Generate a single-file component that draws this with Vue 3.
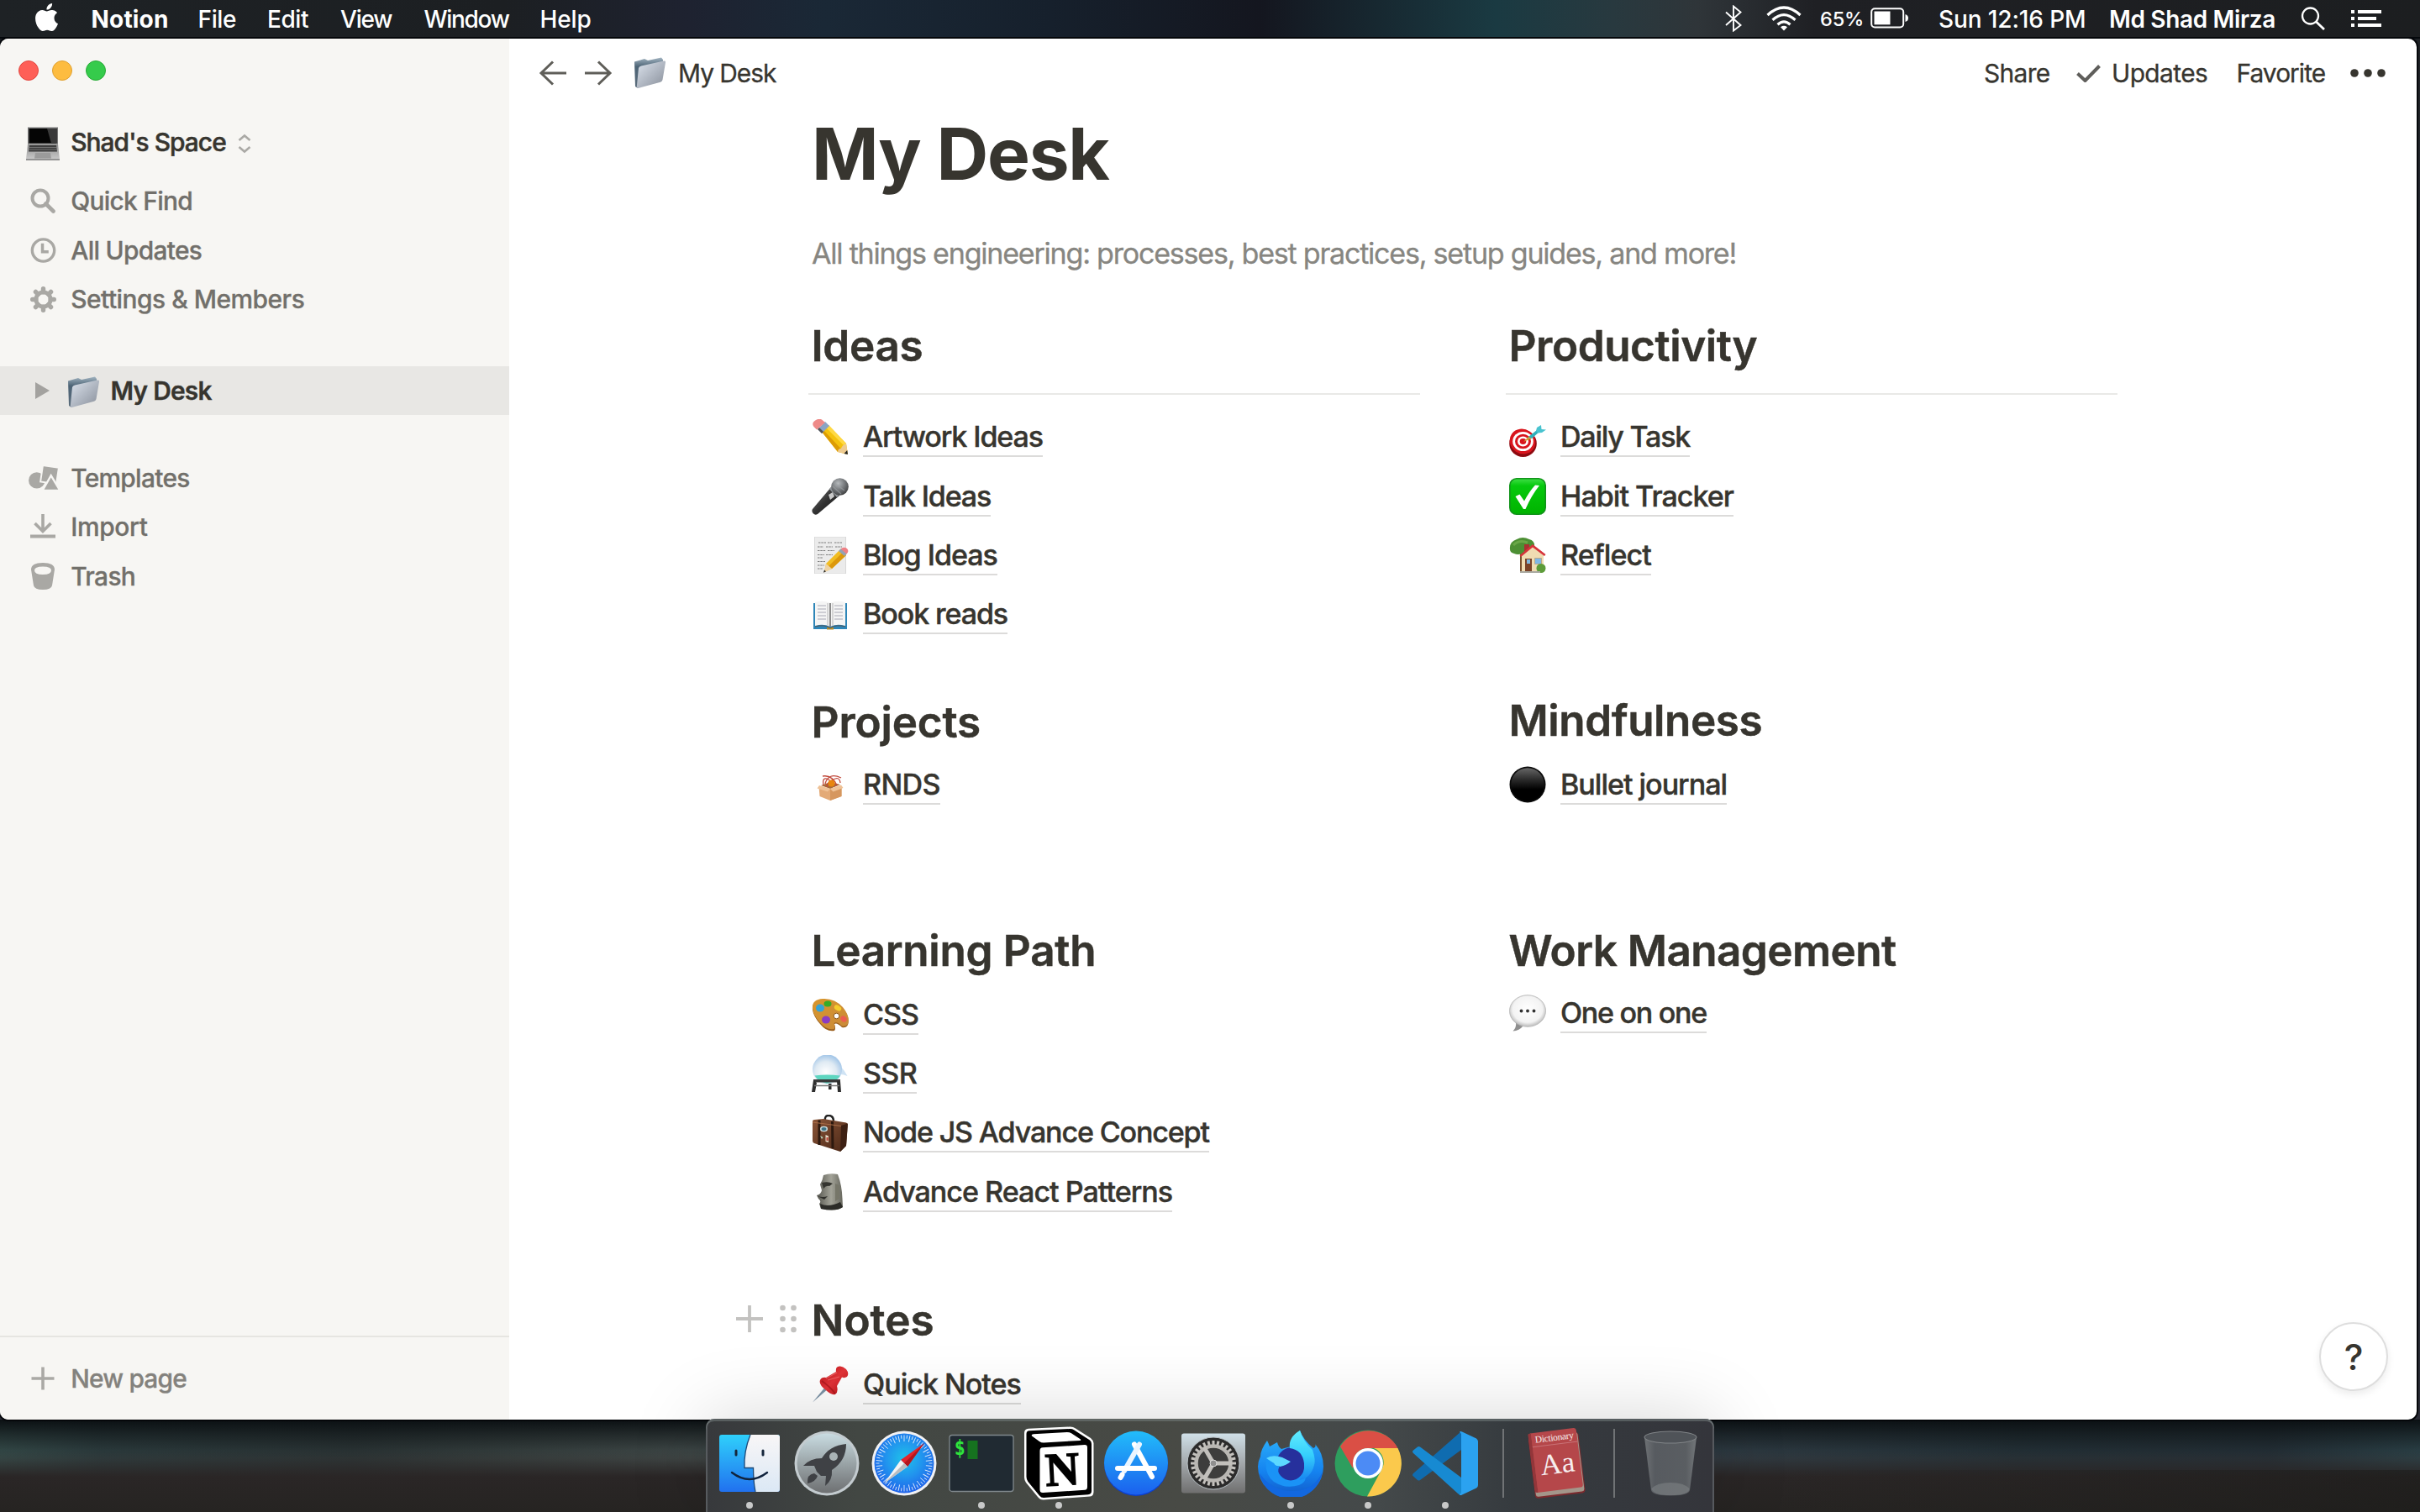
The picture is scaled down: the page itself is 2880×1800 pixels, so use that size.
<script setup>
const menus = [
  { text: 'Notion', w: 127, ls: 0.19, bold: true },
  { text: 'File', w: 82.5, ls: -0.37 },
  { text: 'Edit', w: 87, ls: -0.42 },
  { text: 'View', w: 99.5, ls: -1.2 },
  { text: 'Window', w: 138, ls: -1.3 },
  { text: 'Help', w: 70, ls: -0.12 },
]

const sideTop = [
  { icon: 'find', text: 'Quick Find', ls: -0.72 },
  { icon: 'clock', text: 'All Updates', ls: -0.72 },
  { icon: 'gear', text: 'Settings & Members', ls: -0.5 },
]
const sideBottom = [
  { icon: 'templates', text: 'Templates', ls: -0.71 },
  { icon: 'import', text: 'Import', ls: -0.36 },
  { icon: 'trash', text: 'Trash', ls: -0.68 },
]

const columns = [
  [
    {
      title: 'Ideas', ls: -0.32, rule: true, size: 'tall', links: [
        { icon: 'pencil', text: 'Artwork Ideas', ls: -1.12 },
        { icon: 'mic', text: 'Talk Ideas', ls: -1.22 },
        { icon: 'memo', text: 'Blog Ideas', ls: -1.02 },
        { icon: 'book', text: 'Book reads', ls: -1.13 },
      ],
    },
    {
      title: 'Projects', ls: -0.14, size: 'short', links: [
        { icon: 'box', text: 'RNDS', ls: -0.62 },
      ],
    },
    {
      title: 'Learning Path', ls: -0.28, size: 'mid', links: [
        { icon: 'palette', text: 'CSS', ls: -1.01 },
        { icon: 'flask', text: 'SSR', ls: -0.7 },
        { icon: 'case', text: 'Node JS Advance Concept', ls: -1.17 },
        { icon: 'moai', text: 'Advance React Patterns', ls: -1.01 },
      ],
    },
    {
      title: 'Notes', ls: 0.03, size: 'last', handle: true, links: [
        { icon: 'pin', text: 'Quick Notes', ls: -1.01 },
      ],
    },
  ],
  [
    {
      title: 'Productivity', ls: -0.41, rule: true, size: 'tall up', links: [
        { icon: 'target', text: 'Daily Task', ls: -1.25 },
        { icon: 'check', text: 'Habit Tracker', ls: -0.99 },
        { icon: 'house', text: 'Reflect', ls: -0.92 },
      ],
    },
    {
      title: 'Mindfulness', ls: -0.42, size: 'short down', links: [
        { icon: 'circle', text: 'Bullet journal', ls: -1.03 },
      ],
    },
    {
      title: 'Work Management', ls: -0.55, size: 'mid close', links: [
        { icon: 'bubble', text: 'One on one', ls: -1.3 },
      ],
    },
  ],
]

const dock = [
  { icon: 'finder', dot: true },
  { icon: 'launchpad' },
  { icon: 'safari' },
  { icon: 'terminal', dot: true },
  { icon: 'notion', dot: true },
  { icon: 'appstore' },
  { icon: 'settings' },
  { icon: 'firefox', dot: true },
  { icon: 'chrome', dot: true },
  { icon: 'vscode', dot: true },
]

const ticks = Array.from({ length: 60 }, (_, i) => ({ a: i * 6, long: i % 2 === 0 }))
const teeth = Array.from({ length: 28 }, (_, i) => i * (360 / 28))
</script>

<template>
  <div class="screen">
    <!-- Shared artwork -->
    <svg class="defs" width="0" height="0" aria-hidden="true">
      <defs>
        <linearGradient id="g-folder" x1="0" y1="0" x2="1" y2="1"><stop offset="0" stop-color="#dde4ee" /><stop offset=".6" stop-color="#a9b0bb" /><stop offset="1" stop-color="#878d98" /></linearGradient>
        <linearGradient id="g-back" x1="0" y1="0" x2="0" y2="1"><stop offset="0" stop-color="#a3b5c2" /><stop offset=".3" stop-color="#4c6375" /><stop offset="1" stop-color="#5d6e7d" /></linearGradient>
        <linearGradient id="g-mic" x1="0" y1="0" x2="1" y2="1"><stop offset="0" stop-color="#777" /><stop offset=".5" stop-color="#333" /><stop offset="1" stop-color="#111" /></linearGradient>
        <radialGradient id="g-michead" cx=".4" cy=".3" r=".8"><stop offset="0" stop-color="#b6babd" /><stop offset=".6" stop-color="#66696c" /><stop offset="1" stop-color="#333" /></radialGradient>
        <linearGradient id="g-check" x1="0" y1="0" x2="0" y2="1"><stop offset="0" stop-color="#3ede45" /><stop offset=".2" stop-color="#06c90d" /><stop offset="1" stop-color="#00b300" /></linearGradient>
        <linearGradient id="g-circle" x1="0" y1="0" x2="0" y2="1"><stop offset="0" stop-color="#666" /><stop offset=".35" stop-color="#2b2b2b" /><stop offset=".65" stop-color="#000" /></linearGradient>
        <linearGradient id="g-wood" x1="0" y1="0" x2="1" y2="1"><stop offset="0" stop-color="#d8962c" /><stop offset="1" stop-color="#c98a3a" /></linearGradient>
        <radialGradient id="g-flask" cx=".45" cy=".6" r=".6"><stop offset="0" stop-color="#ffffff" /><stop offset=".6" stop-color="#dfeaf3" /><stop offset="1" stop-color="#a3c6e8" /></radialGradient>
        <linearGradient id="g-case" x1="0" y1="0" x2="1" y2="1"><stop offset="0" stop-color="#8a5538" /><stop offset="1" stop-color="#4a2716" /></linearGradient>
        <linearGradient id="g-moai" x1="0" y1="0" x2="1" y2="0"><stop offset="0" stop-color="#55554e" /><stop offset=".55" stop-color="#a3a398" /><stop offset="1" stop-color="#66665d" /></linearGradient>
        <radialGradient id="g-bubble" cx=".5" cy=".45" r=".55"><stop offset="0" stop-color="#fff" /><stop offset=".75" stop-color="#f3f3f3" /><stop offset="1" stop-color="#b9b9b9" /></radialGradient>
        <linearGradient id="g-pin" x1="0" y1="0" x2="1" y2="1"><stop offset="0" stop-color="#b51216" /><stop offset=".5" stop-color="#e23338" /><stop offset="1" stop-color="#b81218" /></linearGradient>
        <linearGradient id="g-laptop" x1="0" y1="0" x2="0" y2="1"><stop offset="0" stop-color="#8d8d8d" /><stop offset="1" stop-color="#c9c9c9" /></linearGradient>
        <linearGradient id="g-finder" x1="0" y1="0" x2="0" y2="1"><stop offset="0" stop-color="#2fd0fb" /><stop offset="1" stop-color="#2171ef" /></linearGradient>
        <linearGradient id="g-finder2" x1="0" y1="0" x2="0" y2="1"><stop offset="0" stop-color="#f8f6f7" /><stop offset="1" stop-color="#dbe8f5" /></linearGradient>
        <linearGradient id="g-launch" x1="0" y1="0" x2="0" y2="1"><stop offset="0" stop-color="#c9dce2" /><stop offset=".5" stop-color="#9aa4a7" /><stop offset="1" stop-color="#6e7072" /></linearGradient>
        <radialGradient id="g-safari" cx=".5" cy=".42" r=".6"><stop offset="0" stop-color="#1fc3e9" /><stop offset=".5" stop-color="#2195ee" /><stop offset="1" stop-color="#2060ea" /></radialGradient>
        <linearGradient id="g-store" x1="0" y1="0" x2="0" y2="1"><stop offset="0" stop-color="#22bdfa" /><stop offset="1" stop-color="#1b60ee" /></linearGradient>
        <linearGradient id="g-set" x1="0" y1="0" x2="0" y2="1"><stop offset="0" stop-color="#d0e0e8" /><stop offset=".5" stop-color="#a3a8ab" /><stop offset="1" stop-color="#6f6f6f" /></linearGradient>
        <linearGradient id="g-fox" x1="0" y1="0" x2="0" y2="1"><stop offset="0" stop-color="#2fb6fb" /><stop offset=".6" stop-color="#1583f0" /><stop offset="1" stop-color="#1159c8" /></linearGradient>
        <linearGradient id="g-flame" x1="0" y1="0" x2="0" y2="1"><stop offset="0" stop-color="#62ecff" /><stop offset=".5" stop-color="#35cffc" /><stop offset="1" stop-color="#1785f0" /></linearGradient>
        <linearGradient id="g-bin" x1="0" y1="0" x2="1" y2="0"><stop offset="0" stop-color="#74787b" /><stop offset=".2" stop-color="#5b5f64" /><stop offset=".8" stop-color="#5e6266" /><stop offset="1" stop-color="#7a7e81" /></linearGradient>
      </defs>

      <symbol id="i-folder" viewBox="0 0 39 38">
        <path d="M1 5.500 L13 2 L17 4 L33 .5 L35 3 L35 12 L5 37 L2 35Z" fill="url(#g-back)" />
        <path d="M6 13 Q6.500 11 9 10.500 L36 4.500 Q38.500 4 38 6.500 L34.500 27 Q34 29 32 29.800 L5.500 37 Q3.500 37.500 3.800 35Z" fill="url(#g-folder)" />
      </symbol>
      <symbol id="i-laptop" viewBox="0 0 40 40">
        <path d="M2 .5h36v20H2z" fill="#777" /><path d="M3.500 2h33v17.500h-33z" fill="#050505" /><path d="M25 2h11.500v17.500H30z" fill="#3a3a3a" />
        <path d="M2 20.500h36L40 38.500H0z" fill="url(#g-laptop)" />
        <path d="M4 22h32l1 7.500H3z" fill="#3d3d3d" /><path d="M4 24.500h32.500M3.600 27h33" stroke="#8a8a8a" stroke-width=".7" />
        <path d="M11 31h18l1 6.500H10z" fill="#9b9b9b" /><path d="M0 38.200h40v1.500H0z" fill="#777" />
      </symbol>

      <symbol id="i-pencil" viewBox="0 0 44 44">
        <path d="M12 15 L20 7 L41 29 L43 42 L31 39Z" fill="#f4c20d" /><path d="M17 10 L20 7 L41 29 L38 31Z" fill="#ffd943" /><path d="M12 15 L14 13 L35 35.500 L31 39Z" fill="#dc9c05" />
        <path d="M41 29 L43 42 L31 39 Q31 35 35 35 Q36 31 41 29Z" fill="#eecb90" /><path d="M42.200 37 L43 42 L38.500 41Z" fill="#222" />
        <path d="M7 12 L16 3 L21 8 L12 17Z" fill="#8aa4c4" /><path d="M7 12 L9 10 L14 15 L12 17Z" fill="#555" />
        <path d="M2.500 9 Q-.5 5 3.500 2 Q8-1.500 12 .5 L16 4 L6 12.500Z" fill="#ee8a88" />
      </symbol>
      <symbol id="i-mic" viewBox="0 0 44 44">
        <path d="M23 11 L33 21 L7 43 Q4 45 1.500 42 Q-.5 39 1 37Z" fill="url(#g-mic)" /><path d="M20 20 L25 17 L27 22 L22 26Z" fill="#c9c9c9" />
        <path d="M22 12 L31 22" stroke="#8f9498" stroke-width="3" /><circle cx="33.500" cy="10.500" r="10.300" fill="url(#g-michead)" />
        <path d="M27 6 L39 15 M25 10 L35 19" stroke="#9da1a4" stroke-width="1.500" opacity=".6" />
      </symbol>
      <symbol id="i-memo" viewBox="0 0 44 44">
        <path d="M3.500 0h37v44h-37z" fill="#ebebeb" stroke="#d9d9d9" />
        <path d="M8 7h9m2 0h5m3 0h9M7 12h7m3 0h8m3 0h8M7 16.500h10m2 0h8M7 21.500h8m2 0h8M7 25h6M7 29.500h9M7 34h8M7 38h6" stroke="#7d7d7d" stroke-width="1.100" stroke-dasharray="2.500 .8" />
        <path d="M17 32 L34 15 L41 22 L24 38 L15 42Z" fill="#f1bd22" /><path d="M20 35 L37 18.500 L41 22 L24 38Z" fill="#dc980c" />
        <path d="M17 32 L24 38 L14.500 42.500Z" fill="#eed3a4" /><path d="M15 39.500 L17 41.300 L14 42.700Z" fill="#222" /><path d="M32 17 L35 14 L42 20 L39 23Z" fill="#93a3b5" />
        <path d="M34.500 14.500 Q38 11.500 42 14 Q45 17 41.500 20.500Z" fill="#ee8085" />
      </symbol>
      <symbol id="i-book" viewBox="0 0 44 44">
        <path d="M2 8h40v31H2z" fill="#2e86b8" /><path d="M18 37h8v2.500h-8z" fill="#b38b2c" />
        <path d="M4 7 Q14 4 22 8 Q30 4 40 7 V35 Q30 32 22 36 Q14 32 4 35Z" fill="#f5f5f5" />
        <path d="M22 8 V36" stroke="#8b8b8b" stroke-width="2" /><path d="M19 8v27M25 8v27" stroke="#d5d5d5" stroke-width="2" />
        <path d="M7 11h10M7 15h10M7 19h10M7 23h10M7 27h10M27 11h10M27 15h10M27 19h10M27 23h10M27 27h10" stroke="#a8a8b4" stroke-width="1" /><path d="M4 36 Q14 33 22 37.500 Q30 33 40 36" stroke="#555" fill="none" />
      </symbol>
      <symbol id="i-box" viewBox="0 0 44 44">
        <path d="M8.500 24 L22 27 L35.500 24 V36 L22 41 L9.500 36Z" fill="#e3aa77" /><path d="M22 27 L35.500 24 V36 L22 41Z" fill="#d6975f" />
        <path d="M11 23 L22 19 L34 22 L22 27Z" fill="#a86a38" />
        <path d="M14 23 Q12 12 20 16 Q25 19 28 24 M34 20 Q33 11 24 17 Q17 21 18 25 M13 12 Q24 10 30 23 M35 14 Q20 7 16 21" fill="none" stroke="#c14a3c" stroke-width="1.300" />
        <circle cx="23.500" cy="20.500" r="4" fill="#e8860f" />
        <path d="M9 23 L22 27 L19 30.500 L6.500 26.500Z M35 22.500 L22 27 L25.500 30.500 L37.500 26Z" fill="#efc297" />
      </symbol>
      <symbol id="i-palette" viewBox="0 0 44 44">
        <path d="M1 16 Q0 5 13 4 Q27 3 37 14 Q46 25 43 34 Q41 38 36 37 Q30 31 27 33 Q29 39 27 41 Q18 43 10 33 Q2 24 1 16Z" fill="#9a5f1d" />
        <path d="M1 14.500 Q0 4 13 3 Q27 2 37 13 Q46 24 43 33 Q41 36.500 36 35.500 Q30 29.500 26.500 32 Q28.500 37 26.500 39 Q18 41 10 31.500 Q2 23 1 14.500Z" fill="url(#g-wood)" />
        <circle cx="29.500" cy="23.500" r="3.300" fill="#fff" stroke="#8c5618" />
        <ellipse cx="10" cy="14" rx="5" ry="4.500" fill="#35a3d6" /><ellipse cx="19" cy="9" rx="4.500" ry="3.500" fill="#33ab28" /><ellipse cx="31" cy="14" rx="4.500" ry="3" transform="rotate(30 31 14)" fill="#f5cc2e" /><ellipse cx="38" cy="27" rx="4" ry="3.300" transform="rotate(40 38 27)" fill="#ec5d50" /><ellipse cx="17" cy="28" rx="5" ry="4.500" fill="#8a3cc4" />
      </symbol>
      <symbol id="i-flask" viewBox="0 0 44 44">
        <path d="M33 12 Q39 18 42.500 25 Q38 23 34 23Z" fill="#cfe3f4" /><circle cx="18.500" cy="17" r="17.500" fill="url(#g-flask)" /><path d="M3.500 24.500 Q18 22.500 34 24.500 Q30 31 18 34 Q7 31 3.500 24.500Z" fill="#5ed6c0" />
        <path d="M2 29 H34 V32.500 H2Z" fill="#3a3a3a" /><path d="M2 30 L0 44 H4 L6 33Z M30 31 L31 44 H35 L34 31Z M20 34h3.500v7H20z" fill="#2e2e2e" /><path d="M3 36.500h30" stroke="#777" stroke-width="1.500" />
      </symbol>
      <symbol id="i-case" viewBox="0 0 44 44">
        <path d="M16 8 Q15 1 20 1 Q26 1 26 8" fill="none" stroke="#222" stroke-width="2.500" />
        <path d="M1 8 Q1 6 3 6 L14 5 L41 9.500 Q43 10 42.800 12 L41 37 L34 44 L3 34 Q1 33.500 1 31Z" fill="url(#g-case)" /><path d="M35 13 L43 10.500 L41 37 L34 44Z" fill="#3d2013" />
        <path d="M9 6.500V36M24.500 8 25 40" stroke="#2d190f" stroke-width="3" /><path d="M1 9 L35 13.500" stroke="#a86c46" stroke-width="1" />
        <ellipse cx="14.500" cy="17" rx="4.500" ry="3.300" fill="#cfe2e4" /><ellipse cx="14.500" cy="17" rx="3" ry="2.100" fill="#3e7385" /><path d="M16.500 24 L20 25.500 V33 L16.500 32Z" fill="#e5dcc8" /><path d="M17.500 27h2v4h-2z" fill="#b83b2d" /><path d="M10 25 L13.500 27 L12 29Z" fill="#b7dcc6" />
      </symbol>
      <symbol id="i-moai" viewBox="0 0 44 44">
        <path d="M14 2 Q22-1 31 1 Q36 14 36.500 30 L37 40 Q30 46 11 42 L9 36 Q12 33 8 30 L6 26 Q11 25 12 20 L10 13 Q13 8 14 2Z" fill="url(#g-moai)" />
        <path d="M12 11 Q20 9 25 12 L21 15 Q17 14 14 18Z" fill="#34342f" /><path d="M7 27 Q13 29 19 27 L15 31Z" fill="#2e2e2a" /><path d="M10 36 Q20 41 34 34 L37 40 Q28 46 11 42Z" fill="#2c2c28" /><path d="M28 12 L33 14 V30 L28 33Z" fill="#767669" />
      </symbol>
      <symbol id="i-pin" viewBox="0 0 44 44">
        <path d="M17 24 L20 27 L1 43.500Z" fill="#7c93a6" /><path d="M10 17 Q12 13 17 14 L29 7 Q28 1 33 .5 Q37 0 41 4 Q45 9 42 13 Q39 15 36 13.500 L30 24 Q32 31 28 34 Q23 35 17 29 Q8 22 10 17Z" fill="url(#g-pin)" />
        <path d="M17 15 L30 8 M19 17 L33 13" stroke="#ff8b8b" stroke-width="1.300" opacity=".5" /><path d="M12 18 Q21 24 28 33" fill="none" stroke="#9c1015" stroke-width="2" opacity=".6" />
      </symbol>
      <symbol id="i-target" viewBox="0 0 44 44">
        <ellipse cx="16.500" cy="27" rx="16.300" ry="16" fill="#8e0a10" /><ellipse cx="16" cy="24.500" rx="15.700" ry="14.500" transform="rotate(35 16 24.500)" fill="#d8151d" /><ellipse cx="16.500" cy="24.500" rx="12.300" ry="11.500" fill="#fff" /><ellipse cx="16.500" cy="24.500" rx="9.500" ry="8.700" fill="#d8151d" /><ellipse cx="16.500" cy="24.500" rx="6.500" ry="5.900" fill="#fff" /><ellipse cx="16.500" cy="24.500" rx="3.800" ry="3.400" fill="#d8151d" />
        <path d="M17 25 L24 18 L27 21Z" fill="#c9a33a" /><path d="M23 19 L33 11 L36 13 L27 21Z" fill="#2fb1bb" /><path d="M32 12 L33 8 L38 5 L38.500 10 L44 10.500 L39 14 L34 14.500Z" fill="#49c3cf" />
      </symbol>
      <symbol id="i-check" viewBox="0 0 44 44">
        <rect x=".8" y=".8" width="42.400" height="42.400" rx="8" fill="url(#g-check)" stroke="#11931a" stroke-width="1.600" /><path d="M7.500 22 L12.500 19.500 L18 27.500 Q24 16 31 8.500 L36 9 Q27 20 19.500 37 H17Z" fill="#fff" />
      </symbol>
      <symbol id="i-house" viewBox="0 0 44 44">
        <path d="M13 18h5v24h-5z" fill="#7c5230" /><path d="M1 15 Q0 6 9 3 Q16-1 24 3 Q31 5 30 12 Q26 19 16 20 Q10 22 6 20 Q1 19 1 15Z" fill="#4d8f34" /><path d="M5 10 Q12 3 22 7" stroke="#6aa748" fill="none" stroke-width="3" />
        <path d="M18 9h6v8h-6z" fill="#a93030" /><path d="M15 22 L28 11 L41 22 V41 H15Z" fill="#f0dcb2" /><path d="M12.500 22 L28 9 L43.500 21 L42 23 L28 12.500 L14 24Z" fill="#d6333a" />
        <path d="M19 26h8v15h-8z" fill="#7b4227" /><path d="M21 27h4v5h-4z" fill="#7fb7e0" /><path d="M30.500 25.500h8v7h-8z" fill="#7fb7e6" stroke="#b9a888" /><circle cx="38" cy="37.500" r="5.500" fill="#5d9c39" /><path d="M13 41h24v2H13z" fill="#a9a9a0" />
      </symbol>
      <symbol id="i-circle" viewBox="0 0 44 44"><circle cx="22" cy="22" r="21.500" fill="#0a0a0a" /><circle cx="22" cy="22" r="19.800" fill="url(#g-circle)" /></symbol>
      <symbol id="i-bubble" viewBox="0 0 44 44">
        <path d="M8 33 Q9 39 4.500 43.500 Q12 43 17 37Z" fill="#8e8e8e" /><ellipse cx="22" cy="19.500" rx="21.500" ry="18.800" fill="url(#g-bubble)" stroke="#b3b3b3" stroke-width=".8" /><circle cx="14.500" cy="19.500" r="1.900" fill="#333" /><circle cx="22" cy="19.500" r="1.900" fill="#333" /><circle cx="29.500" cy="19.500" r="1.900" fill="#333" />
      </symbol>

      <symbol id="i-find" viewBox="0 0 30 30"><circle cx="12" cy="12" r="9.500" fill="none" stroke="currentColor" stroke-width="4" /><path d="M18.500 18.500 L27.500 27.500" stroke="currentColor" stroke-width="4.600" stroke-linecap="round" /></symbol>
      <symbol id="i-clock" viewBox="0 0 32 32"><circle cx="16" cy="16" r="13.600" fill="none" stroke="currentColor" stroke-width="3.500" /><path d="M15 7.500 V17.700 H22.500" fill="none" stroke="currentColor" stroke-width="3.600" /></symbol>
      <symbol id="i-gear" viewBox="0 0 32 32"><g stroke="currentColor" stroke-width="5.600"><path v-for="k in 4" :key="k" d="M16 2.800 V7 M16 25 V29.200" :transform="`rotate(${k * 45} 16 16)`" stroke-linecap="round" /></g><circle cx="16" cy="16" r="8.900" fill="none" stroke="currentColor" stroke-width="5" /></symbol>
      <symbol id="i-templates" viewBox="0 0 38 32"><circle cx="10.500" cy="19.500" r="10" fill="currentColor" /><path d="M18 1 L37.500 4 L34.500 24 L15 21Z" fill="currentColor" stroke="#f7f6f3" stroke-width="2" /><path d="M28 13.500 L39 32 H17.500Z" fill="currentColor" stroke="#f7f6f3" stroke-width="2.400" /></symbol>
      <symbol id="i-import" viewBox="0 0 30 30"><path d="M15 0 V20 M5.500 11 L15 20.500 L24.500 11" fill="none" stroke="currentColor" stroke-width="3.600" /><path d="M0 26.500h30" stroke="currentColor" stroke-width="4" /></symbol>
      <symbol id="i-trash" viewBox="0 0 28 32"><path fill-rule="evenodd" d="M0 8 Q0 0 14 0 Q28 0 28 8 L25 27 Q24 32 14 32 Q4 32 3 27Z M4 9 Q4 14 14 14 Q24 14 24 9 Q24 4.500 14 4.500 Q4 4.500 4 9Z" fill="currentColor" /></symbol>

      <symbol id="d-finder" viewBox="0 0 80 80">
        <rect x="4" y="6" width="72" height="68" rx="3" fill="url(#g-finder)" /><path d="M41 6 H73 Q76 6 76 9 V71 Q76 74 73 74 H47 Q45 62 45 46 H34 Q33 26 41 6Z" fill="url(#g-finder2)" />
        <path d="M41 6 Q33 26 34 45.500 H44.500 Q44.500 62 47 74" fill="none" stroke="#1d4a78" stroke-width="1.300" /><path d="M24 25v5M56 25v5" stroke="#16273c" stroke-width="3" stroke-linecap="round" /><path d="M19 51 Q40 67 61 51" fill="none" stroke="#10233c" stroke-width="2.400" stroke-linecap="round" />
      </symbol>
      <symbol id="d-launchpad" viewBox="0 0 80 80">
        <circle cx="40" cy="40" r="38.500" fill="#c3cbcf" /><circle cx="40" cy="40" r="35.500" fill="url(#g-launch)" />
        <path d="M63 17 Q43 19 34 34 Q20 34 12 43 L25 43 L28 50 L33 55 L39 55 L38 67 Q47 60 46 48 Q63 37 63 17Z" fill="#3f4145" /><path d="M25 52 Q16 53 17 64 Q27 62 29 55Z" fill="#3f4145" /><circle cx="48" cy="32" r="5" fill="#a9b3b6" />
      </symbol>
      <symbol id="d-safari" viewBox="0 0 80 80">
        <circle cx="40" cy="40" r="38.500" fill="#f1f1f3" /><circle cx="40" cy="40" r="35.500" fill="url(#g-safari)" />
        <path v-for="t in ticks" :key="t.a" :d="t.long ? 'M40 6.500V14' : 'M40 6.500V10.500'" stroke="#fff" stroke-width=".9" opacity=".85" :transform="`rotate(${t.a} 40 40)`" />
        <path d="M64 16 L36 36 L44 44Z" fill="#e3242c" /><path d="M64 16 L40 40 L44 44Z" fill="#b3161e" /><path d="M16 64 L36 36 L44 44Z" fill="#f4f4f4" /><path d="M16 64 L40 40 L44 44Z" fill="#b9bcc0" />
      </symbol>
      <symbol id="d-terminal" viewBox="0 0 80 80"><rect x="2" y="6.500" width="76" height="67" rx="3" fill="#202a32" stroke="#7f888c" stroke-width="1.300" /><path d="M23.500 13h12v22h-12z" fill="#16721f" /></symbol>
      <symbol id="d-notion" viewBox="0 0 84 88">
        <path d="M1 8 Q1 3 6 2.800 L55 .5 Q59 .3 62 2.500 L80 14 Q83.500 17 83.500 20 V78 Q83.500 83 79 83.500 L24 87.500 Q20 87.800 17 84 L3 67 Q1 64 1 61Z" fill="#fff" />
        <path d="M3.500 9 Q3.500 5.500 7 5.300 L55 3 Q58 2.800 60 4.300 L79 16.500 Q81 18 81 21 V77 Q81 81 77 81.200 L24 85 Q21 85 19 82.500 L5.500 66 Q3.500 63.500 3.500 60Z" fill="#000" />
        <path d="M10 11.500 Q9 9.500 12 9.200 L52 7 Q55 7 57 8.300 L68 15.500 Q69 17 67 17 L24 19.500 Q21 19.500 19 18Z" fill="#fff" /><path d="M19.500 29 Q19.500 25.500 23 25.300 L73 22 Q76 22 76 25 V72 Q76 75.500 73 75.800 L23 79 Q19.500 79 19.500 75.500Z" fill="#fff" />
      </symbol>
      <symbol id="d-appstore" viewBox="0 0 80 80">
        <circle cx="40" cy="41" r="38" fill="#0b3fd0" /><circle cx="40" cy="39.500" r="38" fill="url(#g-store)" />
        <g stroke="#fff" stroke-width="6" stroke-linecap="round" fill="none"><path d="M38 17.500 L59 56" /><path d="M44 17.500 L26 49" stroke="#eaf5ff" /><path d="M18 46h44" /><path d="M23.500 53.500 L21.500 57" /></g>
      </symbol>
      <symbol id="d-settings" viewBox="0 0 80 80">
        <rect x="2" y="4.500" width="76" height="71" rx="3" fill="url(#g-set)" /><circle cx="40" cy="40" r="31" fill="#2b2b2b" /><circle cx="40" cy="40" r="31" fill="none" stroke="#b9c1c5" stroke-width="1" />
        <g stroke="#c4c2be" stroke-width="3"><path v-for="a in teeth" :key="a" d="M40 13v6" :transform="`rotate(${a} 40 40)`" /></g>
        <circle cx="40" cy="40" r="20.500" fill="#3d3d3c" stroke="#b9b7b3" stroke-width="4.500" /><path d="M40 40H62M40 40L29 21M40 40L29 59" stroke="#c2c0bc" stroke-width="5" /><circle cx="40" cy="40" r="4" fill="#8f8f8f" stroke="#ddd" />
      </symbol>
      <symbol id="d-firefox" viewBox="0 0 80 80">
        <path d="M4 32 Q4 24 12 13 Q14 17 15 20 L24 15 Q25 20 29 23 L40 20 Q40 8 51 1 Q55 12 67 22 Q71 20 69 17 Q79 28 79 44 A38 37 0 0 1 1 44 Q1 38 4 32Z" fill="url(#g-fox)" />
        <path d="M3 52 Q18 74 44 73 Q68 72 78 50 A38 37 0 0 1 3 52Z" fill="#1268e0" />
        <path d="M11 34 Q18 31 26 34 L40 38 L57 53 Q60 62 50 66 Q34 71 20 62 Q8 52 11 34Z" fill="#1a93f6" />
        <ellipse cx="40" cy="41" rx="17" ry="19.500" fill="#26309c" /><path d="M51 1 Q37 9 39 22 Q54 24 56 40 Q57 52 50 60 Q64 58 68 42 Q70 36 66 24 Q55 14 51 1Z" fill="url(#g-flame)" />
        <path d="M11 34 Q18 29 30 33 L40 38 Q34 43 27 44 Q22 44 20 40Z" fill="#5cd8ff" /><path d="M12 36 L20 40 Q22 44 27 43 Q23 50 28 58 Q20 54 16 46Z" fill="#1a93f6" />
      </symbol>
      <symbol id="d-chrome" viewBox="0 0 80 80">
        <circle cx="40" cy="40" r="39.500" fill="#2e9e5e" /><path d="M7 20 A39.500 39.500 0 0 1 75.500 22 H40 A18 18 0 0 0 24 32 L22 46Z" fill="#da4f45" /><path d="M75.500 22 A39.500 39.500 0 0 1 39 79.500 L55.500 49 A18 18 0 0 0 47 22Z" fill="#fbc94c" /><circle cx="40" cy="40" r="18" fill="#fff" /><circle cx="40" cy="40" r="14.500" fill="#4c8bf5" />
      </symbol>
      <symbol id="d-vscode" viewBox="0 0 80 80">
        <path d="M2 52 Q0 54 2 55.500 L7 60 Q8.500 61 10 60 L59 24 V2Z" fill="#0f6cb0" /><path d="M2 28 Q0 26 2 24.500 L7 20.500 Q8.500 19.500 10 20.500 L59 57 V78 Q57 78 55 76Z" fill="#178ad2" /><path d="M57 2.500 Q58 1.500 60 2.500 L77 10.500 Q79 12 79 14 V66 Q79 68.500 77 69.500 L60 77.500 Q58 78.500 57 77.500 L59 75 V5Z" fill="#2ba2f0" />
      </symbol>
      <symbol id="d-bin" viewBox="0 0 64 78">
        <path d="M1 8 L9 71 Q10 77.500 32 77.500 Q54 77.500 55 71 L63 8Z" fill="url(#g-bin)" opacity=".9" /><ellipse cx="32" cy="8" rx="31" ry="7" fill="#4f5358" stroke="#808487" stroke-width="1.100" /><path d="M9.500 69 Q16 62 32 62 Q48 62 54.500 69 Q54 77 32 77 Q11 77 9.500 69Z" fill="#8a8e90" opacity=".45" />
      </symbol>
    </svg>

    <header class="menubar">
      <svg class="apple" viewBox="0 0 24 24"><path fill="#fff" d="M12.152 6.896c-.948 0-2.415-1.078-3.960-1.040-2.040.027-3.910 1.183-4.961 3.014-2.117 3.675-.546 9.103 1.519 12.090 1.013 1.454 2.208 3.090 3.792 3.039 1.520-.065 2.090-.987 3.935-.987 1.831 0 2.350.987 3.960.948 1.637-.026 2.676-1.480 3.676-2.948 1.156-1.688 1.636-3.325 1.662-3.415-.039-.013-3.182-1.221-3.220-4.857-.026-3.040 2.480-4.494 2.597-4.559-1.429-2.090-3.623-2.324-4.390-2.376-2-.156-3.675 1.090-4.610 1.090zM15.530 3.830c.843-1.012 1.400-2.427 1.245-3.830-1.207.052-2.662.805-3.532 1.818-.780.896-1.454 2.338-1.273 3.714 1.338.104 2.715-.688 3.559-1.701" /></svg>
      <span v-for="m in menus" :key="m.text" class="menu" :class="{ bold: m.bold }" :style="{ width: m.w + 'px', letterSpacing: m.ls + 'px' }">{{ m.text }}</span>
      <div class="status">
        <svg class="bt" viewBox="0 0 22 32"><path d="M2 8.500 L19.500 24 L11 30.500 V1.500 L19.500 8.500 L2 24" fill="none" stroke="#fff" stroke-width="1.900" /></svg>
        <svg class="wifi" viewBox="0 0 42 30"><g fill="none" stroke="#fff" stroke-width="3.200"><path d="M1.500 11 Q21-7 40.500 11" /><path d="M7.500 16.800 Q21 4.500 34.500 16.800" /><path d="M13.500 22.200 Q21 15.500 28.500 22.200" /></g><path d="M17 25.200 Q21 22.300 25 25.200 L21 29.500Z" fill="#fff" /></svg>
        <span class="pct">65%</span>
        <svg class="battery" viewBox="0 0 46 25"><rect x="1.200" y="1.200" width="38" height="22.200" rx="4" fill="none" stroke="#fff" stroke-width="2" /><path d="M4.500 4.500h19v15.800h-19z" fill="#fff" /><path d="M41.500 8 Q45 9 45 12.500 Q45 16 41.500 17Z" fill="#fff" /></svg>
        <span class="time">Sun 12:16 PM</span>
        <span class="user">Md Shad Mirza</span>
        <svg class="spot" viewBox="0 0 30 28"><circle cx="11.500" cy="11" r="9.500" fill="none" stroke="#fff" stroke-width="2.300" /><path d="M18 17.500 L28 27" stroke="#fff" stroke-width="2.800" /></svg>
        <svg class="list" viewBox="0 0 36 20"><path d="M0 2h4M8 2h28M0 10h4M8 10h22M0 18h4M8 18h28" stroke="#fff" stroke-width="3.800" /></svg>
      </div>
    </header>

    <main class="window">
      <aside class="sidebar">
        <div class="lights"><i class="red"></i><i class="amber"></i><i class="green"></i></div>
        <div class="row space">
          <span class="slot"><svg width="40" height="40"><use href="#i-laptop" /></svg></span>
          <span class="label dark">Shad's Space</span>
          <svg class="updown" viewBox="0 0 16 22"><path d="M1.500 7 L8 1.500 L14.500 7 M1.500 15 L8 20.500 L14.500 15" fill="none" stroke="#aaa9a5" stroke-width="2.600" /></svg>
        </div>
        <div v-for="r in sideTop" :key="r.text" class="row">
          <span class="slot"><svg :class="r.icon"><use :href="'#i-' + r.icon" /></svg></span>
          <span class="label" :style="{ letterSpacing: r.ls + 'px' }">{{ r.text }}</span>
        </div>
        <div class="row selected">
          <svg class="tri" viewBox="0 0 17 20"><path d="M0 0 L17 10 L0 20Z" fill="#a3a29f" /></svg>
          <svg class="folder"><use href="#i-folder" /></svg>
          <span class="label dark desk">My Desk</span>
        </div>
        <div v-for="r in sideBottom" :key="r.text" class="row">
          <span class="slot"><svg :class="r.icon"><use :href="'#i-' + r.icon" /></svg></span>
          <span class="label" :style="{ letterSpacing: r.ls + 'px' }">{{ r.text }}</span>
        </div>
        <div class="newpage">
          <span class="slot"><svg width="28" height="28" viewBox="0 0 28 28"><path d="M14 .5v27M.5 14h27" stroke="#aaa9a5" stroke-width="3.600" /></svg></span>
          <span class="label new">New page</span>
        </div>
      </aside>

      <section class="content">
        <div class="topbar">
          <svg class="arrow" viewBox="0 0 33 30"><path d="M17 1.500 L3 15 L17 28.500 M3 15 H33" fill="none" stroke="#5f5e59" stroke-width="3" /></svg>
          <svg class="arrow fwd" viewBox="0 0 33 30"><path d="M16 1.500 L30 15 L16 28.500 M30 15 H0" fill="none" stroke="#5f5e59" stroke-width="3" /></svg>
          <svg class="folder"><use href="#i-folder" /></svg>
          <span class="crumb">My Desk</span>
          <div class="actions">
            <span class="share">Share</span>
            <svg class="tick" viewBox="0 0 30 21"><path d="M2 10.500 L11 19 L28 1.500" fill="none" stroke="#5f5e5b" stroke-width="4" /></svg>
            <span class="updates">Updates</span>
            <span class="fav">Favorite</span>
            <svg class="more" viewBox="0 0 42 10"><circle cx="5" cy="5" r="4.800" /><circle cx="21" cy="5" r="4.800" /><circle cx="37" cy="5" r="4.800" /></svg>
          </div>
        </div>

        <h1>My Desk</h1>
        <p class="lead">All things engineering: processes, best practices, setup guides, and more!</p>

        <div class="columns">
          <div v-for="(col, c) in columns" :key="c" class="col">
            <section v-for="s in col" :key="s.title" class="group" :class="s.size">
              <h2 :style="{ letterSpacing: s.ls + 'px' }">
                <span v-if="s.handle" class="handle">
                  <svg width="32" height="32" viewBox="0 0 32 32"><path d="M16 0v32M0 16h32" stroke="#c3c2c0" stroke-width="3.800" /></svg>
                  <svg width="20" height="34" viewBox="0 0 20 34"><g fill="#c3c2c0"><circle cx="3.500" cy="4" r="3.300" /><circle cx="16.500" cy="4" r="3.300" /><circle cx="3.500" cy="17" r="3.300" /><circle cx="16.500" cy="17" r="3.300" /><circle cx="3.500" cy="30" r="3.300" /><circle cx="16.500" cy="30" r="3.300" /></g></svg>
                </span>{{ s.title }}
              </h2>
              <hr v-if="s.rule" />
              <a v-for="l in s.links" :key="l.text" class="link">
                <svg class="emoji"><use :href="'#i-' + l.icon" /></svg>
                <span :style="{ letterSpacing: l.ls + 'px' }">{{ l.text }}</span>
              </a>
            </section>
          </div>
        </div>
        <div class="help">?</div>
      </section>
    </main>

    <nav class="dock">
      <div v-for="d in dock" :key="d.icon" class="app" :class="d.icon">
        <svg class="pic"><use :href="'#d-' + d.icon" /></svg>
        <b v-if="d.icon === 'terminal'" class="prompt">$</b>
        <b v-if="d.icon === 'notion'" class="enn">N</b>
        <i v-if="d.dot" class="dot"></i>
      </div>
      <span class="sep"></span>
      <div class="dictionary">
        <div class="cover"><small>Dictionary</small><span>Aa</span></div>
      </div>
      <span class="sep"></span>
      <svg class="bin"><use href="#d-bin" /></svg>
    </nav>
  </div>
</template>

<style>
html, body { background: #1e1d1d; overflow: hidden; }
</style>

<style scoped>
* { box-sizing: border-box; }
.screen {
  position: relative; width: 2880px; height: 1800px; overflow: hidden;
  display: flex; flex-direction: column;
  font-family: Inter, "Liberation Sans", sans-serif; color: #37352f;
  background:
    linear-gradient(180deg, #0b1013 0, rgba(14, 19, 21, .6) 18px, rgba(14, 19, 21, 0) 46px) 0 1690px / 100% 110px no-repeat,
    linear-gradient(90deg, rgba(38, 34, 34, 0) 0, rgba(26, 26, 24, 0) 2100px, rgba(26, 26, 24, .55) 2880px) 0 1750px / 100% 50px no-repeat,
    linear-gradient(180deg, rgba(42, 37, 38, 0) 36px, #2a2626 68px, #262422 110px) 0 1690px / 100% 110px no-repeat,
    linear-gradient(90deg, #3a5250 0, #304143 120px, #2e3839 420px, #3a4443 600px, #475150 820px, #33414a 2060px, #26343b 2400px, #26323a 2700px, #2f474e 2880px) 0 1690px / 100% 110px no-repeat,
    linear-gradient(180deg, #1c2023 0, #2a2b36 400px, #2a2b36 1690px) 0 0 / 100% 1690px no-repeat;
}
.defs { position: absolute; }
svg { display: block; flex: none; }

.menubar {
  height: 46px; flex: none; display: flex; align-items: center; padding-bottom: 1px;
  border-bottom: 2px solid #04070b; color: #fff; font-size: 28px; font-weight: 500; line-height: 44px;
  background: linear-gradient(90deg, #1e2225 0, #1c1f22 600px, #1e2230 820px, #1a2836 980px, #16202c 1250px, #14161f 1500px, #1a3a42 1780px, #28393f 1920px, #2f3539 2020px, #1f2024 2160px, #1c1e20 2880px);
}
.menubar > span, .status span { position: relative; top: 1px; }
.apple { width: 33px; height: 33px; margin: -3px 0 0 38.500px; }
.menu { flex: none; white-space: nowrap; }
.menu:first-of-type { margin-left: 37px; }
.bold { font-weight: 700; }
.status { margin-left: auto; display: flex; align-items: center; }
.bt { width: 22px; height: 32px; margin-right: 28px; }
.wifi { width: 42px; height: 30px; margin-right: 22px; }
.pct { font-size: 23.500px; letter-spacing: -.16px; width: 60px; }
.battery { width: 46px; height: 25px; }
.time { width: 203px; margin-left: 35px; letter-spacing: -.12px; white-space: nowrap; }
.user { font-weight: 600; letter-spacing: -.35px; width: 228px; white-space: nowrap; }
.spot { width: 30px; height: 28px; }
.list { width: 36px; height: 20px; margin: 0 46px 0 30px; }

.window {
  width: 2876px; height: 1644px; flex: none; display: flex; border-radius: 10px; overflow: hidden; background: #fff;
  box-shadow: 0 0 0 2px #05070a;
}
.sidebar { width: 606px; flex: none; background: #f7f6f3; display: flex; flex-direction: column; }
.lights { height: 76px; flex: none; display: flex; align-items: center; gap: 16px; padding-left: 22px; }
.lights i { width: 24px; height: 24px; border-radius: 50%; }
.red { background: #fe5f57; border: 1px solid #e2463f; }
.amber { background: #fdbc40; border: 1px solid #e0a030; }
.green { background: #35cb4b; border: 1px solid #27aa35; }
.row { height: 58.500px; flex: none; display: flex; align-items: center; color: #a9a8a4; }
.space { height: 88px; padding-top: 6px; }
.slot { width: 67px; margin-left: 17.500px; display: flex; justify-content: center; flex: none; }
.space .slot svg { margin-top: 4px; }
.label { font-size: 29.900px; font-weight: 500; color: #72706b; line-height: 40px; white-space: nowrap; -webkit-text-stroke: .3px currentColor; }
.label.dark { color: #37352f; }
.space .label { letter-spacing: -.95px; -webkit-text-stroke-width: .5px; }
.updown { width: 16px; height: 38px; margin: 4px 0 0 14px; }
.slot + .label { margin-left: -.3px; }
.find { width: 30px; height: 30px; }
.clock { width: 31px; height: 32px; }
.gear { width: 31px; height: 31px; }
.templates { width: 38px; height: 31px; }
.import { width: 30px; height: 30px; }
.trash { width: 28px; height: 32px; }
.templates { margin-left: 2px; }
.selected { height: 58px; margin: 50.500px 0 45.500px; background: #e8e7e4; }
.tri { width: 17px; height: 20px; margin-left: 41.500px; }
.folder { width: 39px; height: 38px; }
.selected .folder { margin: 3px 0 0 21.500px; }
.label.desk { font-weight: 600; letter-spacing: -.77px; margin-left: 12.500px; }
.newpage { height: 100px; margin-top: auto; border-top: 2px solid #e6e5e1; display: flex; align-items: center; }
.label.new { color: #84827d; letter-spacing: -.81px; }

.content { flex: 1; position: relative; display: flex; flex-direction: column; }
.topbar { height: 82px; flex: none; display: flex; align-items: center; padding-left: 35px; font-size: 29.900px; -webkit-text-stroke: .3px currentColor; }
.arrow { width: 33px; height: 30px; }
.fwd { margin-left: 21.500px; }
.topbar .folder { margin-left: 25px; }
.crumb { margin-left: 14.500px; letter-spacing: -1.020px; }
.actions { margin-left: auto; display: flex; align-items: center; white-space: nowrap; }
.share { width: 109px; letter-spacing: -.65px; }
.tick { width: 31px; height: 21px; margin-right: 12px; }
.updates { width: 148.500px; letter-spacing: -.59px; }
.fav { width: 135.500px; letter-spacing: -.95px; }
.more { width: 42px; height: 10px; margin-right: 37px; fill: #37352f; }

h1 { margin: 2px 0 0 360px; font-size: 85.500px; font-weight: 700; line-height: 106px; letter-spacing: -1.250px; }
.lead { margin: 40.600px 0 0 360px; font-size: 34.100px; line-height: 50px; letter-spacing: -1.240px; color: #878681; white-space: nowrap; -webkit-text-stroke: .3px currentColor; }
.columns { margin: 52.800px 0 0 356px; display: flex; gap: 102px; }
.col { width: 728px; }
.group { display: flex; flex-direction: column; align-items: flex-start; }
.tall { height: 448px; }
.short { height: 272px; }
.mid { height: 440px; }
.tall.up { height: 446px; }
.short.down { height: 274px; }
h2 { position: relative; margin: 0 0 7px 3.500px; font-size: 51.200px; font-weight: 600; line-height: 64px; white-space: nowrap; -webkit-text-stroke: .5px currentColor; }
.mid h2, .last h2 { margin-bottom: 9px; }
.short.down h2 { margin-bottom: 9px; }
.mid.close h2 { margin-bottom: 7px; }
.tall h2 { margin-bottom: 24.600px; }
hr { width: 728px; height: 2px; border: 0; margin: 0 0 15px; background: #e9e9e7; }
.link { display: flex; align-items: center; height: 70.400px; padding-left: 4px; font-size: 34.100px; font-weight: 500; line-height: 44px; }
.link span { border-bottom: 2px solid #dcdbda; padding-top: 2px; white-space: nowrap; -webkit-text-stroke: .4px currentColor; }
.emoji { width: 44px; height: 44px; margin: 1px 17px 0 0; }
.tall.up .link:first-of-type .emoji { margin-top: 5px; }
.handle { position: absolute; left: -89.500px; top: 14px; display: flex; gap: 20px; align-items: center; }
.help {
  position: absolute; left: 2154px; top: 1528px; width: 82px; height: 82px; border-radius: 50%; background: #fff;
  border: 2px solid #dedede; box-shadow: 0 4px 10px rgba(15, 15, 15, .08);
  font-size: 43px; font-weight: 500; line-height: 78px; text-align: center;
}

.dock {
  position: absolute; left: 840px; top: 1689px; width: 1200px; height: 111px; border-radius: 10px 10px 0 0;
  display: flex; align-items: center; padding: 0 6px 6px 6px;
  background: linear-gradient(90deg, #37393c 0, #424743 180px, #484a45 560px, #44494a 800px, #363b3f 960px, #34353b 1200px);
  box-shadow: inset 0 3px 0 rgba(120, 130, 130, .5), inset 2px 0 0 rgba(120, 125, 130, .5), inset -2px 0 0 rgba(120, 125, 130, .5), 0 0 90px rgba(0, 0, 0, .17);
}
.app { position: relative; width: 92px; height: 105px; display: flex; align-items: center; justify-content: center; flex: none; }
.pic { width: 80px; height: 80px; }
.notion .pic { width: 84px; height: 88px; }
.dot { position: absolute; left: 42px; bottom: -2px; width: 8px; height: 8px; border-radius: 50%; background: #c8c9c9; }
.prompt { position: absolute; left: 13px; top: 21px; font: 700 24px/28px "DejaVu Sans Mono", monospace; color: #2ee43c; transform: scaleX(.9); }
.enn { position: absolute; left: 30px; top: 32px; font: 700 56px/56px "Liberation Serif", serif; color: #000; transform: rotate(-3deg); -webkit-text-stroke: 1.500px #000; }
.sep { width: 2px; height: 82px; background: #707375; flex: none; margin-left: 22px; }
.dictionary { width: 68px; margin-left: 28px; margin-top: -6px; }
.dictionary + .sep { margin-left: 34px; }
.cover {
  width: 58px; height: 71px; margin-left: 4px; transform: rotate(-7deg); background: #b5474a; border-radius: 3px; border-left: 4px solid #93363a;
  box-shadow: 1px 5px 0 #a3968a, 1px 6px 0 1px #7c2a2e; color: #f6eeee; display: flex; flex-direction: column; align-items: center;
  font-family: "Liberation Serif", serif;
}
.cover small { font-size: 11.500px; line-height: 16px; border-bottom: 1px solid #c97276; width: 100%; text-align: center; letter-spacing: -.3px; }
.cover span { font-size: 35px; line-height: 38px; margin-top: 4px; }
.bin { width: 64px; height: 78px; margin-left: 34px; }
</style>
